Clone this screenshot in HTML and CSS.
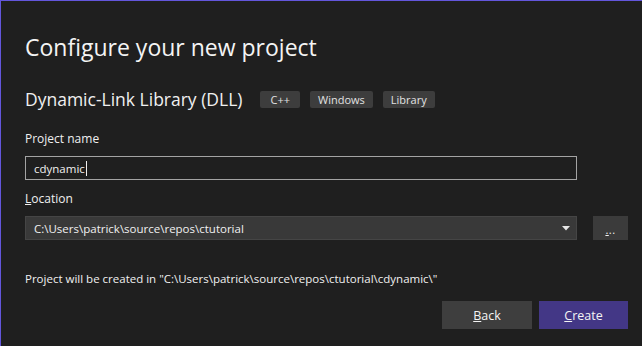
FILE: index.html
```html
<!DOCTYPE html>
<html lang="en">
<head>
  <meta charset="UTF-8">
  <title>Configure your new project</title>
  <link rel="stylesheet" href="styles.css">
</head>
<body>

<div class="dialog">
  <h1 class="title">Configure your new project</h1>

  <div class="template-row">
    <span class="template-name">Dynamic-Link Library (DLL)</span>
    <span class="tag tag-cpp">C++</span>
    <span class="tag">Windows</span>
    <span class="tag">Library</span>
  </div>

  <div class="field field-name">
    <label class="field-label" for="projectName">Project name</label>
    <div class="text-box">
      <span class="text-value">cdynamic</span><span class="caret"></span>
    </div>
  </div>

  <div class="field field-location">
    <label class="field-label" for="location"><u>L</u>ocation</label>
    <div class="location-row">
      <div class="combo">
        <span class="text-value">C:\Users\patrick\source\repos\ctutorial</span>
        <svg class="combo-arrow" width="8" height="5" viewBox="0 0 8 5">
          <path d="M0 0H8L4 4.5Z" fill="#e6e6e6"/>
        </svg>
      </div>
      <div class="browse-btn"><span class="browse-dots"><u>.</u>..</span></div>
    </div>
  </div>

  <p class="status">Project will be created in "C:\Users\patrick\source\repos\ctutorial\cdynamic\"</p>

  <div class="actions">
    <button class="btn btn-back"><u>B</u>ack</button>
    <button class="btn btn-create"><u>C</u>reate</button>
  </div>
</div>

</body>
</html>
```

FILE: styles.css
```css
body {
  margin: 0;
  padding: 0;
  background-color: #1f1f1f;
  font-family: "Open Sans", "Noto Sans", sans-serif;
  color: #f0f0f0;
}

.dialog {
  width: 642px;
  height: 346px;
  box-sizing: border-box;
  border-top: 1px solid #6356dc;
  border-left: 1px solid #6356dc;
  padding: 30px 14px 0 24px;
  display: flex;
  flex-direction: column;
}

.title {
  margin: 0;
  font-size: 23px;
  font-weight: 400;
  line-height: 32px;
  color: #f4f4f4;
}

.template-row {
  margin-top: 24px;
  height: 24px;
  display: flex;
  align-items: center;
}

.template-name {
  font-size: 17.5px;
  line-height: 24px;
  margin-right: 18px;
}

.tag {
  height: 17px;
  line-height: 17px;
  padding: 0 8px;
  margin-right: 10px;
  background-color: #3d3d3d;
  border-radius: 2px;
  font-size: 11px;
  color: #e2e2e2;
}

.tag-cpp {
  padding: 0 10px;
}

.field {
  display: flex;
  flex-direction: column;
}

.field-name {
  margin-top: 19px;
}

.field-location {
  margin-top: 10px;
}

.field-label {
  font-size: 12px;
  line-height: 18px;
  margin-bottom: 8px;
  color: #f0f0f0;
}

.text-box {
  width: 552px;
  height: 24px;
  box-sizing: border-box;
  border: 1px solid #a3a3a3;
  padding: 0 8px;
  display: flex;
  align-items: center;
}

.text-value {
  font-size: 11.5px;
  color: #f0f0f0;
}

.caret {
  width: 1px;
  height: 15px;
  background-color: #f0f0f0;
  margin-left: 1px;
}

.location-row {
  display: flex;
  gap: 16px;
}

.combo {
  width: 552px;
  height: 24px;
  box-sizing: border-box;
  border: 1px solid #454545;
  background-color: #393939;
  padding: 0 6px 0 8px;
  display: flex;
  align-items: center;
  justify-content: space-between;
}

.browse-btn {
  width: 35px;
  height: 24px;
  background-color: #3b3b3b;
  display: flex;
  align-items: center;
  justify-content: center;
}

.browse-dots {
  font-size: 11px;
  line-height: 11px;
  color: #f0f0f0;
  letter-spacing: 0.5px;
  padding-top: 3px;
}

.status {
  margin: 30px 0 0;
  font-size: 11.5px;
  line-height: 18px;
  color: #f0f0f0;
}

.actions {
  margin-top: 13px;
  display: flex;
  justify-content: flex-end;
  gap: 7px;
}

.btn {
  height: 28px;
  width: 90px;
  border: none;
  font-family: "Open Sans", "Noto Sans", sans-serif;
  font-size: 12.5px;
  color: #f4f4f4;
  cursor: pointer;
}

.btn-back {
  background-color: #3e3e3e;
}

.btn-create {
  width: 89px;
  background-color: #433786;
}
```
